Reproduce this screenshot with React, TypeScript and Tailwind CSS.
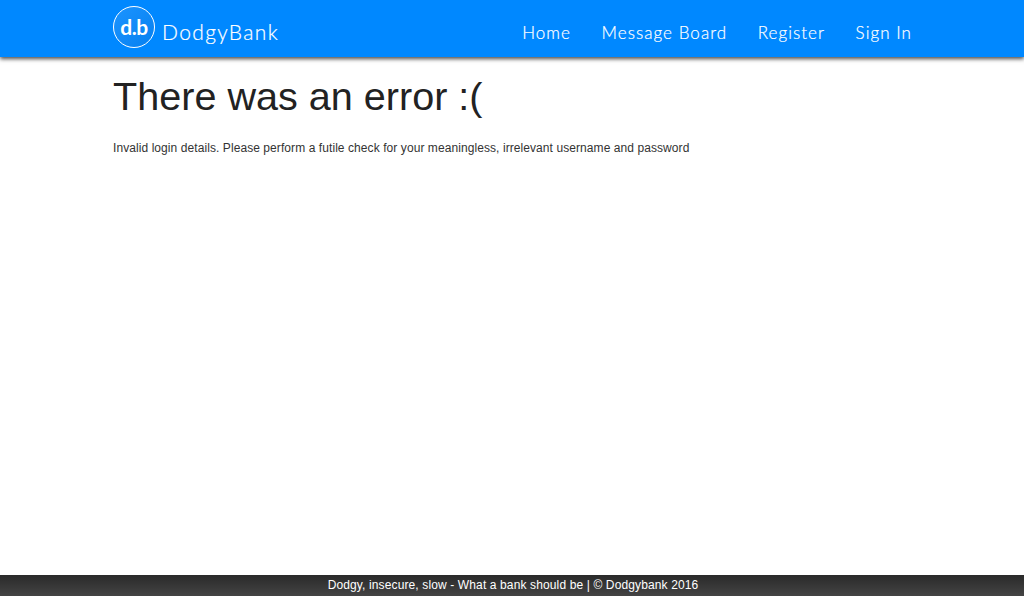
import React from "react";

const links = ["Home", "Message Board", "Register", "Sign In"];

const Logo = () => {
  return (
    <div className="w-[42px] h-[42px] rounded-full border-[1.5px] border-white bg-gradient-to-br from-[#1b94ff] to-[#0580f0] flex items-center justify-center">
      <span className="text-white font-bold text-[21px] tracking-[-0.4px] leading-none mb-[1px] font-['Lato',sans-serif]">d.b</span>
    </div>
  );
};

const App = () => {
  return (
    <div className="flex flex-col h-screen bg-white font-['Liberation_Sans',Arial,sans-serif] text-[#333333]">
      <nav className="h-[57px] shrink-0 bg-[#0088ff] shadow-[0_2px_4px_rgba(0,0,0,0.7)] pl-[113px] pr-[112px] flex items-center justify-between">
        <div className="flex items-center gap-[7px] mt-[-3px]">
          <Logo />
          <span className="text-white text-[21px] tracking-[1.35px] font-light mt-[9px] [-webkit-text-stroke:0.2px_white] font-['Lato',sans-serif]">DodgyBank</span>
        </div>
        <div className="flex gap-[30.5px] mt-[9px]">
          {links.map((link) => (
            <a key={link} href="#" className="text-white text-[17px] tracking-[1.05px] font-light [-webkit-text-stroke:0.2px_white] font-['Lato',sans-serif]">{link}</a>
          ))}
        </div>
      </nav>
      <main className="flex-1 pl-[113px]">
        <h1 className="text-[39.6px] leading-[46px] font-normal text-[#222222] mt-[16px]">There was an error :(</h1>
        <p className="text-[12px] tracking-[0.076px] leading-[17px] mt-[21px]">Invalid login details. Please perform a futile check for your meaningless, irrelevant username and password</p>
      </main>
      <footer className="h-[21px] shrink-0 pl-[2px] bg-gradient-to-b from-[#2a2a2a] to-[#444444] text-white text-[12px] tracking-[0.127px] leading-[21px] text-center">
        Dodgy, insecure, slow - What a bank should be | © Dodgybank 2016
      </footer>
    </div>
  );
};

export default App;
